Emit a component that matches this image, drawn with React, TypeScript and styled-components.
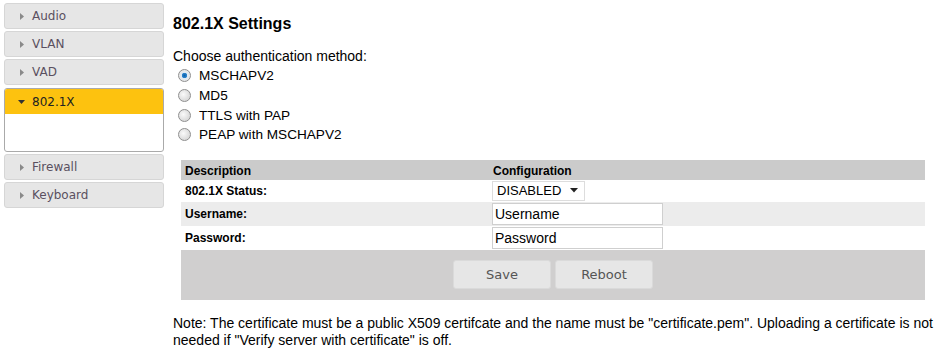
import styled, { createGlobalStyle } from 'styled-components'

const GlobalStyle = createGlobalStyle`
  html, body { margin: 0; padding: 0; background: #fff; }
  body { font-family: "Liberation Sans", Arial, sans-serif; color: #000; }
`

const menu = ['Audio', 'VLAN', 'VAD', '802.1X', 'Firewall', 'Keyboard']
const methods = ['MSCHAPV2', 'MD5', 'TTLS with PAP', 'PEAP with MSCHAPV2']

export default function App() {
    return (
        <Page>
            <GlobalStyle />
            <Sidebar>
                {menu.map((m) => (
                    m === '802.1X' ? (
                        <ActivePanel key={m}>
                            <ActiveHead>
                                <Arrow open />
                                {m}
                            </ActiveHead>
                        </ActivePanel>
                    ) : (
                        <MenuItem key={m}>
                            <Arrow />
                            {m}
                        </MenuItem>
                    )
                ))}
            </Sidebar>

            <Main>
                <Title>802.1X Settings</Title>
                <Prompt>Choose authentication method:</Prompt>
                <RadioList>
                    {methods.map((m, i) => (
                        <RadioRow key={m}>
                            <Radio checked={i === 0} />
                            {m}
                        </RadioRow>
                    ))}
                </RadioList>

                <Table>
                    <thead>
                        <HeadRow>
                            <HeadCell>Description</HeadCell>
                            <HeadCell>Configuration</HeadCell>
                        </HeadRow>
                    </thead>
                    <tbody>
                        <Row h={22}>
                            <Label>802.1X Status:</Label>
                            <Cell>
                                <SelectBox>
                                    DISABLED
                                    <svg width="8" height="5" viewBox="0 0 8 5">
                                        <path d="M0 0 L8 0 L4 4.5 Z" fill="#222" />
                                    </svg>
                                </SelectBox>
                            </Cell>
                        </Row>
                        <Row h={24} shade>
                            <Label>Username:</Label>
                            <Cell><TextInput defaultValue="Username" /></Cell>
                        </Row>
                        <Row h={24}>
                            <Label>Password:</Label>
                            <Cell><TextInput defaultValue="Password" /></Cell>
                        </Row>
                        <ButtonRow>
                            <td colSpan={2}>
                                <Buttons>
                                    <Button>Save</Button>
                                    <Button>Reboot</Button>
                                </Buttons>
                            </td>
                        </ButtonRow>
                    </tbody>
                </Table>

                <Note>
                    Note: The certificate must be a public X509 certifcate and the name must be "certificate.pem". Uploading a certificate is not needed if "Verify server with certificate" is off.
                </Note>
            </Main>
        </Page>
    )
}

function Arrow({ open }: { open?: boolean }) {
    return open ? (
        <ArrowIcon width="9" height="9" viewBox="0 0 9 9">
            <path d="M1 3 L8 3 L4.5 7 Z" fill="#333" />
        </ArrowIcon>
    ) : (
        <ArrowIcon width="9" height="9" viewBox="0 0 9 9">
            <path d="M3 1 L7 4.5 L3 8 Z" fill="#8a8a8a" />
        </ArrowIcon>
    )
}

const Page = styled.div`
    display: flex;
    width: 948px;
    height: 351px;
    overflow: hidden;
`

const Sidebar = styled.div`
    width: 160px;
    margin: 3px 0 0 4px;
    display: flex;
    flex-direction: column;
    gap: 2px;
    font-family: "DejaVu Sans", Verdana, sans-serif;
    font-size: 12px;
`

const MenuItem = styled.div`
    height: 24px;
    box-sizing: content-box;
    border: 1px solid #d6d6d6;
    border-radius: 3px;
    background: #e6e6e6;
    color: #5a5060;
    display: flex;
    align-items: center;
    padding-left: 12px;
`

const ActivePanel = styled.div`
    height: 62px;
    margin-top: 1px;
    border: 1px solid #aaa;
    border-radius: 3px;
    background: #fff;
    overflow: hidden;
`

const ActiveHead = styled.div`
    height: 25px;
    background: #fdc20f;
    color: #222;
    display: flex;
    align-items: center;
    padding-left: 12px;
`

const ArrowIcon = styled.svg`
    margin-right: 6px;
    flex: none;
`

const Main = styled.div`
    margin-left: 9px;
    width: 772px;
    padding-top: 14px;
`

const Title = styled.h2`
    margin: 0;
    font-size: 16px;
    font-weight: bold;
    line-height: 20px;
`

const Prompt = styled.div`
    margin-top: 14px;
    font-size: 14px;
    line-height: 17px;
`

const RadioList = styled.div`
    display: flex;
    flex-direction: column;
    margin-top: 1px;
`

const RadioRow = styled.label`
    display: flex;
    align-items: center;
    height: 19.7px;
    font-size: 13.6px;
    padding-left: 5px;
`

const Radio = styled.span<{ checked?: boolean }>`
    width: 11px;
    height: 11px;
    border-radius: 50%;
    border: 1px solid #8f8f8f;
    margin-right: 8px;
    background: ${(p) =>
        p.checked
            ? 'radial-gradient(circle, #0b5fa8 0, #2e86cf 2.5px, #dfe8f0 3px, #e8e8e8 5.5px)'
            : 'radial-gradient(circle at 40% 40%, #fafafa 0, #dcdcdc 6px)'};
`

const Table = styled.table`
    margin: 15px 0 0 8px;
    width: 744px;
    border-collapse: collapse;
    font-size: 12px;
`

const HeadRow = styled.tr`
    background: #cbcbcb;
    height: 20px;
`

const HeadCell = styled.th`
    text-align: left;
    font-weight: bold;
    padding: 2px 0 0 4px;
    &:first-child { width: 307px; }
    &:last-child { padding-left: 1px; }
`

const Row = styled.tr<{ h: number; shade?: boolean }>`
    height: ${(p) => p.h}px;
    background: ${(p) => (p.shade ? '#ececec' : '#fff')};
`

const Label = styled.td`
    font-weight: bold;
    padding: 0 0 0 4px;
`

const Cell = styled.td`
    padding: 0;
`

const SelectBox = styled.div`
    width: 81px;
    height: 18px;
    border: 1px solid #ddd;
    background: #fff;
    font-size: 13px;
    display: flex;
    align-items: center;
    justify-content: space-between;
    padding: 0 6px 0 4px;
`

const TextInput = styled.input`
    width: 165px;
    height: 20px;
    border: 1px solid #cfcfcf;
    padding: 0 2px;
    font-family: "Liberation Sans", Arial, sans-serif;
    font-size: 14px;
    color: #000;
    box-sizing: content-box;
    outline: none;
    display: block;
`

const ButtonRow = styled.tr`
    background: #d0cfcf;
    height: 50px;
`

const Buttons = styled.div`
    display: flex;
    justify-content: center;
    gap: 4px;
`

const Button = styled.button`
    width: 98px;
    height: 29px;
    border: 1px solid #dadada;
    border-radius: 3px;
    background: #e6e6e6;
    color: #555;
    font-family: "DejaVu Sans", Verdana, sans-serif;
    font-size: 13px;
`

const Note = styled.p`
    margin: 15px 0 0 0;
    font-size: 14px;
    line-height: 17px;
`
